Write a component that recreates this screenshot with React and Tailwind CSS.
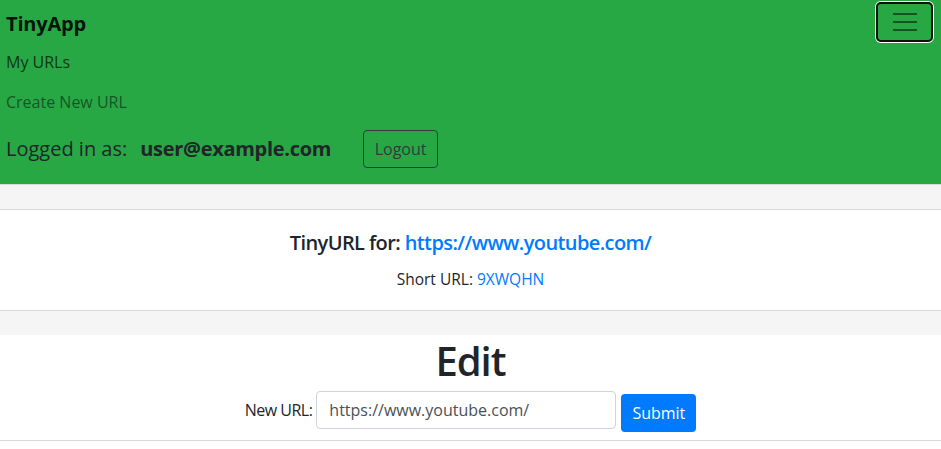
export default function App() {
  return (
    <div className="min-h-[449px] bg-white font-['Open_Sans',sans-serif] text-[#212529]">
      <nav className="h-[184px] bg-[#28a745] pl-[6px] pr-[8px]">
        <div className="flex h-[42px] items-start justify-between">
          <span className="mt-[9px] text-[20px] font-bold leading-[30px] tracking-[-0.2px] text-black/90">TinyApp</span>
          <button className="mt-[2px] flex h-[40px] w-[57px] items-center justify-center rounded-[5px] border-2 border-[#101010] shadow-[0_0_0_1px_#ffffff]">
            <svg width="30" height="30" viewBox="0 0 30 30">
              <path d="M3 7h24M3 15h24M3 23h24" stroke="rgba(0,0,0,0.5)" strokeWidth="2" />
            </svg>
          </button>
        </div>
        <div className="flex flex-col">
          <a className="block py-2 text-[16px] leading-[24px] text-black/70">My URLs</a>
          <a className="block py-2 text-[16px] leading-[24px] text-black/50">Create New URL</a>
        </div>
        <div className="mt-[8px] flex h-[38px] items-center">
          <span className="text-[20px] leading-[30px]">Logged in as:</span>
          <span className="ml-[13px] text-[20px] font-bold leading-[30px] tracking-[-0.3px]">user@example.com</span>
          <button className="ml-[32px] h-[38px] w-[75px] rounded-[4px] border border-[#343a40] text-[16px] leading-[24px] text-[#343a40]">
            Logout
          </button>
        </div>
      </nav>
      <div className="h-[25px] border-t border-[#d9d9d9] bg-[#f5f5f5]" />
      <div className="h-[102px] border-y border-[#d9d9d9] bg-white pt-[21px] text-center">
        <h5 className="text-[20px] font-semibold leading-[24px] tracking-[-0.6px]">
          TinyURL for: <a className="text-[#007bff]">https://www.youtube.com/</a>
        </h5>
        <p className="mt-[12px] text-[15.5px] leading-[24px]">
          Short URL: <a className="text-[#007bff]">9XWQHN</a>
        </p>
      </div>
      <div className="h-[24px] bg-[#f5f5f5]" />
      <div className="h-[106px] border-b border-[#d9d9d9] bg-white pt-[2px]">
        <h1 className="text-center text-[40px] font-semibold leading-[48px] tracking-[-1px]">Edit</h1>
        <div className="mt-[6px] flex items-start justify-center">
          <label className="mt-[7px] text-[16px] leading-[24px] tracking-[-0.5px]">New URL:</label>
          <input
            className="ml-[4px] h-[38px] w-[300px] rounded-[4px] border border-[#ced4da] px-[12px] text-[16px] text-[#495057] outline-none"
            defaultValue="https://www.youtube.com/"
          />
          <button className="ml-[5px] mt-[3px] h-[38px] w-[75px] rounded-[4px] bg-[#007bff] text-[16px] leading-[24px] text-white">
            Submit
          </button>
        </div>
      </div>
    </div>
  );
}
